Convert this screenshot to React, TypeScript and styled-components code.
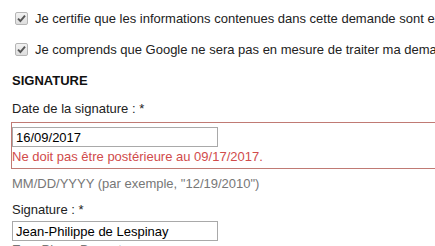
import React from "react";
import styled, { createGlobalStyle } from "styled-components";

const GlobalStyle = createGlobalStyle`
  html, body {
    margin: 0;
    padding: 0;
    background: #fff;
    overflow: hidden;
  }
  body {
    font-family: "Liberation Sans", Arial, sans-serif;
    font-size: 13px;
    color: #222;
  }
`;

function App() {
  return (
    <>
      <GlobalStyle />
      <Page>
        <Checks>
          <CheckRow>
            <FakeCheck>
              <svg width="9" height="9" viewBox="0 0 9 9">
                <path d="M1 4.6 L3.4 7 L8 1.6" fill="none" stroke="#555" strokeWidth="1.9" />
              </svg>
            </FakeCheck>
            <span>
              Je certifie que les informations contenues dans cette demande sont exactes et complètes.
            </span>
          </CheckRow>
          <CheckRow>
            <FakeCheck>
              <svg width="9" height="9" viewBox="0 0 9 9">
                <path d="M1 4.6 L3.4 7 L8 1.6" fill="none" stroke="#555" strokeWidth="1.9" />
              </svg>
            </FakeCheck>
            <span>
              Je comprends que Google ne sera pas en mesure de traiter ma demande si elle est incomplète.
            </span>
          </CheckRow>
        </Checks>

        <SectionTitle>SIGNATURE</SectionTitle>

        <Label>Date de la signature : *</Label>
        <ErrorBox>
          <Input defaultValue="16/09/2017" />
          <ErrorText>Ne doit pas être postérieure au 09/17/2017.</ErrorText>
        </ErrorBox>
        <Hint>MM/DD/YYYY (par exemple, "12/19/2010")</Hint>

        <Label $top={10}>Signature : *</Label>
        <Input $top={3} defaultValue="Jean-Philippe de Lespinay" />
        <Hint $top={1}>Ex. : Pierre Dupont</Hint>
      </Page>
    </>
  );
}

export default App;

const Page = styled.div`
  width: 700px;
  padding-left: 12px;
  white-space: nowrap;
`;

const Checks = styled.div`
  padding-top: 3px;
  display: flex;
  flex-direction: column;
`;

const CheckRow = styled.div`
  display: flex;
  align-items: center;
  height: 31px;
  line-height: 16px;
`;

const FakeCheck = styled.span`
  box-sizing: border-box;
  width: 13px;
  height: 13px;
  margin: 0 7px 0 3px;
  border: 1px solid #b5b5b5;
  border-radius: 2px;
  background: linear-gradient(#f2f2f2, #dedede);
  display: flex;
  align-items: center;
  justify-content: center;
  flex-shrink: 0;
`;

const SectionTitle = styled.div`
  margin-top: 8px;
  line-height: 16px;
  font-weight: bold;
  color: #111;
`;

const Label = styled.div<{ $top?: number }>`
  margin-top: ${(p) => p.$top ?? 12}px;
  line-height: 16px;
  color: #222;
`;

const ErrorBox = styled.div`
  margin: 5px 0 0 -1px;
  border: 1px solid #c07a74;
  padding: 4px 0 3px 0;
`;

const Input = styled.input<{ $top?: number }>`
  display: block;
  box-sizing: border-box;
  width: 206px;
  height: 20px;
  margin: ${(p) => p.$top ?? 0}px 0 0 0;
  padding: 0 3px;
  border: 1px solid #a9a9a9;
  border-radius: 0;
  font-family: "Liberation Sans", Arial, sans-serif;
  font-size: 13px;
  color: #000;
  background: #fff;
  outline: none;
`;

const ErrorText = styled.div`
  margin-top: 2px;
  line-height: 16px;
  color: #d14b4b;
`;

const Hint = styled.div<{ $top?: number }>`
  margin-top: ${(p) => p.$top ?? 7}px;
  line-height: 16px;
  color: #777;
`;
